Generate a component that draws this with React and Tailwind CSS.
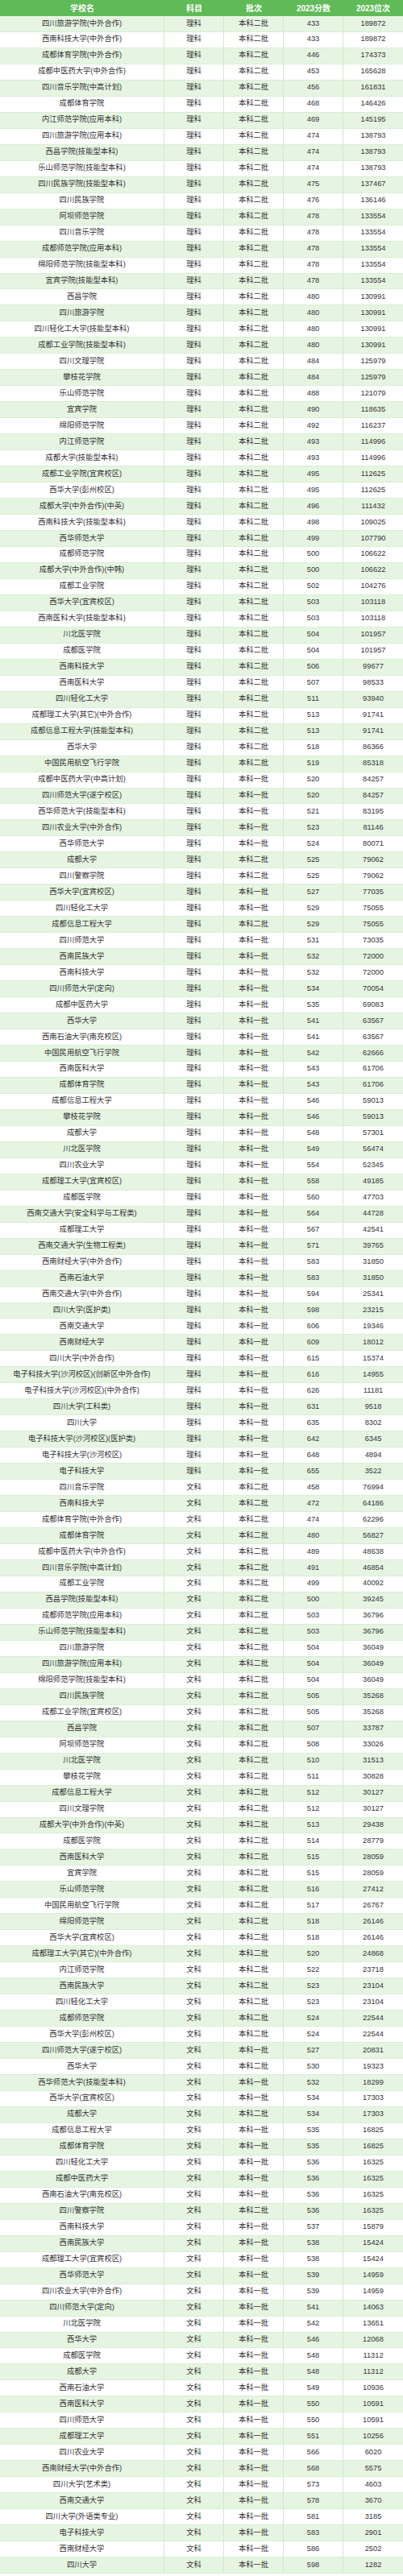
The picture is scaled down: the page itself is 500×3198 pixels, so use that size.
import React from "react";

// 学校名, 科目(l=理科 w=文科), 批次(1=本科一批 2=本科二批), 分数, 位次
const raw = `四川旅游学院(中外合作),l,2,433,189872
西南科技大学(中外合作),l,2,433,189872
成都体育学院(中外合作),l,2,446,174373
成都中医药大学(中外合作),l,2,453,165628
四川音乐学院(中高计划),l,2,456,161831
成都体育学院,l,2,468,146426
内江师范学院(应用本科),l,2,469,145195
四川旅游学院(应用本科),l,2,474,138793
西昌学院(技能型本科),l,2,474,138793
乐山师范学院(技能型本科),l,2,474,138793
四川民族学院(技能型本科),l,2,475,137467
四川民族学院,l,2,476,136146
阿坝师范学院,l,2,478,133554
四川音乐学院,l,2,478,133554
成都师范学院(应用本科),l,2,478,133554
绵阳师范学院(技能型本科),l,2,478,133554
宜宾学院(技能型本科),l,2,478,133554
西昌学院,l,2,480,130991
四川旅游学院,l,2,480,130991
四川轻化工大学(技能型本科),l,2,480,130991
成都工业学院(技能型本科),l,2,480,130991
四川文理学院,l,2,484,125979
攀枝花学院,l,2,484,125979
乐山师范学院,l,2,488,121079
宜宾学院,l,2,490,118635
绵阳师范学院,l,2,492,116237
内江师范学院,l,2,493,114996
成都大学(技能型本科),l,2,493,114996
成都工业学院(宜宾校区),l,2,495,112625
西华大学(彭州校区),l,2,495,112625
成都大学(中外合作)(中英),l,2,496,111432
西南科技大学(技能型本科),l,2,498,109025
西华师范大学,l,2,499,107790
成都师范学院,l,2,500,106622
成都大学(中外合作)(中韩),l,2,500,106622
成都工业学院,l,2,502,104276
西华大学(宜宾校区),l,2,503,103118
西南医科大学(技能型本科),l,2,503,103118
川北医学院,l,2,504,101957
成都医学院,l,2,504,101957
西南科技大学,l,2,506,99677
西南医科大学,l,2,507,98533
四川轻化工大学,l,2,511,93940
成都理工大学(其它)(中外合作),l,2,513,91741
成都信息工程大学(技能型本科),l,2,513,91741
西华大学,l,2,518,86366
中国民用航空飞行学院,l,2,519,85318
成都中医药大学(中高计划),l,1,520,84257
四川师范大学(遂宁校区),l,1,520,84257
西华师范大学(技能型本科),l,1,521,83195
四川农业大学(中外合作),l,1,523,81146
西华师范大学,l,1,524,80071
成都大学,l,2,525,79062
四川警察学院,l,2,525,79062
西华大学(宜宾校区),l,1,527,77035
四川轻化工大学,l,1,529,75055
成都信息工程大学,l,2,529,75055
四川师范大学,l,1,531,73035
西南民族大学,l,1,532,72000
西南科技大学,l,1,532,72000
四川师范大学(定向),l,1,534,70054
成都中医药大学,l,1,535,69083
西华大学,l,1,541,63567
西南石油大学(南充校区),l,1,541,63567
中国民用航空飞行学院,l,1,542,62666
西南医科大学,l,1,543,61706
成都体育学院,l,1,543,61706
成都信息工程大学,l,1,546,59013
攀枝花学院,l,1,546,59013
成都大学,l,1,548,57301
川北医学院,l,1,549,56474
四川农业大学,l,1,554,52345
成都理工大学(宜宾校区),l,1,558,49185
成都医学院,l,1,560,47703
西南交通大学(安全科学与工程类),l,1,564,44728
成都理工大学,l,1,567,42541
西南交通大学(生物工程类),l,1,571,39765
西南财经大学(中外合作),l,1,583,31850
西南石油大学,l,1,583,31850
西南交通大学(中外合作),l,1,594,25341
四川大学(医护类),l,1,598,23215
西南交通大学,l,1,606,19346
西南财经大学,l,1,609,18012
四川大学(中外合作),l,1,615,15374
电子科技大学(沙河校区)(创新区中外合作),l,1,616,14955
电子科技大学(沙河校区)(中外合作),l,1,626,11181
四川大学(工科类),l,1,631,9518
四川大学,l,1,635,8302
电子科技大学(沙河校区)(医护类),l,1,642,6345
电子科技大学(沙河校区),l,1,648,4894
电子科技大学,l,1,655,3522
四川音乐学院,w,2,458,76994
西南科技大学,w,2,472,64186
成都体育学院(中外合作),w,2,474,62296
成都体育学院,w,2,480,56827
成都中医药大学(中外合作),w,2,489,48638
四川音乐学院(中高计划),w,2,491,46854
成都工业学院,w,2,499,40092
西昌学院(技能型本科),w,2,500,39245
成都师范学院(应用本科),w,2,503,36796
乐山师范学院(技能型本科),w,2,503,36796
四川旅游学院,w,2,504,36049
四川旅游学院(应用本科),w,2,504,36049
绵阳师范学院(技能型本科),w,2,504,36049
四川民族学院,w,2,505,35268
成都工业学院(宜宾校区),w,2,505,35268
西昌学院,w,2,507,33787
阿坝师范学院,w,2,508,33026
川北医学院,w,2,510,31513
攀枝花学院,w,2,511,30828
成都信息工程大学,w,2,512,30127
四川文理学院,w,2,512,30127
成都大学(中外合作)(中英),w,2,513,29438
成都医学院,w,2,514,28779
西南医科大学,w,2,515,28059
宜宾学院,w,2,515,28059
乐山师范学院,w,2,516,27412
中国民用航空飞行学院,w,2,517,26767
绵阳师范学院,w,2,518,26146
西华大学(宜宾校区),w,2,518,26146
成都理工大学(其它)(中外合作),w,2,520,24868
内江师范学院,w,2,522,23718
西南民族大学,w,2,523,23104
四川轻化工大学,w,2,523,23104
成都师范学院,w,2,524,22544
西华大学(彭州校区),w,2,524,22544
四川师范大学(遂宁校区),w,1,527,20831
西华大学,w,2,530,19323
西华师范大学(技能型本科),w,1,532,18299
西华大学(宜宾校区),w,1,534,17303
成都大学,w,2,534,17303
成都信息工程大学,w,1,535,16825
成都体育学院,w,1,535,16825
四川轻化工大学,w,1,536,16325
成都中医药大学,w,1,536,16325
西南石油大学(南充校区),w,1,536,16325
四川警察学院,w,2,536,16325
西南科技大学,w,1,537,15879
西南民族大学,w,1,538,15424
成都理工大学(宜宾校区),w,1,538,15424
西华师范大学,w,1,539,14959
四川农业大学(中外合作),w,1,539,14959
四川师范大学(定向),w,1,541,14063
川北医学院,w,1,542,13651
西华大学,w,1,546,12068
成都医学院,w,1,548,11312
成都大学,w,1,548,11312
西南石油大学,w,1,549,10936
西南医科大学,w,1,550,10591
四川师范大学,w,1,550,10591
成都理工大学,w,1,551,10256
四川农业大学,w,1,566,6020
西南财经大学(中外合作),w,1,568,5575
四川大学(艺术类),w,1,573,4603
西南交通大学,w,1,578,3670
四川大学(外语类专业),w,1,581,3185
电子科技大学,w,1,583,2901
西南财经大学,w,1,586,2502
四川大学,w,1,598,1282`;

const rows = raw.split("\n").map((line) => {
  const [name, k, p, score, rank] = line.split(",");
  return {
    name,
    subject: k === "l" ? "理科" : "文科",
    batch: p === "1" ? "本科一批" : "本科二批",
    score,
    rank,
  };
});

const cols = "grid grid-cols-[204px_74px_74px_74px_74px]";

export default function App() {
  return (
    <div
      className="w-[500px] bg-white text-[#333]"
      style={{ fontFamily: '"Liberation Sans", "Noto Sans CJK SC", sans-serif' }}
    >
      <div className={`${cols} h-[20px] bg-[#5fba57] text-white text-[10px] font-bold`}>
        {["学校名", "科目", "批次", "2023分数", "2023位次"].map((h) => (
          <div key={h} className="flex items-center justify-center">
            {h}
          </div>
        ))}
      </div>
      {rows.map((r, i) => (
        <div
          key={i}
          className={`${cols} h-[19.98px] text-[9.3px] border-b border-[#d9eed5] ${
            i % 2 === 0 ? "bg-[#e6f5e2]" : "bg-white"
          }`}
        >
          <div className="flex items-center justify-center border-r border-[#cfe9ca] whitespace-nowrap">
            {r.name}
          </div>
          <div className="flex items-center justify-center border-r border-[#cfe9ca]">{r.subject}</div>
          <div className="flex items-center justify-center border-r border-[#cfe9ca]">{r.batch}</div>
          <div className="flex items-center justify-center border-r border-[#cfe9ca]">{r.score}</div>
          <div className="flex items-center justify-center">{r.rank}</div>
        </div>
      ))}
    </div>
  );
}
